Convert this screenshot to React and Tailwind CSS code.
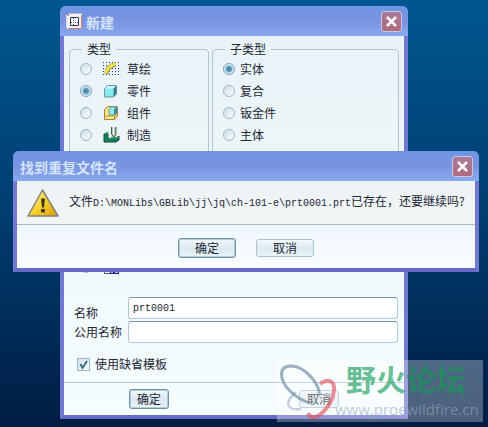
import React from "react";

const TYPES = [
  { label: "草绘", icon: <SketchIcon /> },
  { label: "零件", icon: <PartIcon />, checked: true },
  { label: "组件", icon: <AssemblyIcon /> },
  { label: "制造", icon: <ManufacturingIcon /> },
];

const SUBTYPES = [
  { label: "实体", checked: true },
  { label: "复合" },
  { label: "钣金件" },
  { label: "主体" },
];

function SketchIcon() {
  const dots = [];
  for (let y = 1; y < 15; y += 3) {
    for (let x = 0; x < 17; x += 3) dots.push(<rect key={`${x}-${y}`} x={x} y={y} width="1" height="1" />);
  }
  return (
    <svg width="17" height="16" viewBox="0 0 17 16" aria-hidden="true">
      <g fill="#26379a">{dots}</g>
      <path d="M3.500 13C4 7 7 4 13 3.500" fill="none" stroke="#a39c50" strokeWidth="4.500" />
      <path d="M3 12.500C4 7 7 4 12.500 3" fill="none" stroke="#eee34a" strokeWidth="3" />
    </svg>
  );
}

function PartIcon() {
  return (
    <svg width="17" height="16" viewBox="0 0 17 16" aria-hidden="true">
      <path d="M1.500 5.500 4.500 2.500h9v8l-3 3.500h-9z" fill="#86e9ef" stroke="#6d949c" />
      <path d="M2 5.500 4.500 3h8.500l-2.500 2.500z" fill="#c6fcfc" />
      <path d="m10.500 5.500 3-3v8.500l-3 3z" fill="#3a7e92" />
    </svg>
  );
}

function AssemblyIcon() {
  return (
    <svg width="17" height="16" viewBox="0 0 17 16" aria-hidden="true">
      <path d="M1.500 4.500 4.500 1.500h10V11l-3 3.500h-10z" fill="#f8e784" stroke="#a5823d" />
      <path d="M6 4 8 2h6v6l-2 2H6z" fill="#8ceaf0" stroke="#779a91" />
      <path d="m11 4 3-2v6l-3 2z" fill="#418b9c" />
      <path d="M2 11h9.500l3-3M11.500 11v3" fill="none" stroke="#b99032" />
    </svg>
  );
}

function ManufacturingIcon() {
  return (
    <svg width="17" height="16" viewBox="0 0 17 16" aria-hidden="true">
      <path d="M1 7h4v5h7l4-3v4l-3 2H1z" fill="#168358" stroke="#084f37" />
      <path d="m1 7 2-2h3L5 7zM5 12l3-2h8l-4 2z" fill="#49a47a" />
      <path d="M9 0h4v7l-2 4-2-4z" fill="#b5c5ba" />
      <path d="M8.500 0v7l2.500 4 2-4V0" fill="none" stroke="#2f644b" />
      <path d="M10 0h1v8h-1z" fill="#fff" />
    </svg>
  );
}

function MarkupIcon() {
  return (
    <svg width="17" height="16" viewBox="0 0 17 16" aria-hidden="true">
      <path d="M1.500 1.500h9v13h-9z" fill="#f5f8fc" stroke="#44516f" />
      <path d="M7 7h9v8H7z" fill="#24228a" />
      <path d="M8 10h2v2H8zM12 10h3v2h-3zM8 13h2v1H8zM12 13h3v1h-3z" fill="#b9bde9" />
    </svg>
  );
}

function AppIcon() {
  return (
    <svg width="17" height="17" viewBox="0 0 17 17" aria-hidden="true">
      <path d="M1 1h15v15H1z" fill="#f7f2ee" />
      <path d="M15.500 2v13.500H2" fill="none" stroke="#c58370" />
      <path d="M1 0h15M.5 1v14" stroke="#cfd4ea" />
      <path d="m0 0 3 2.500" stroke="#2b3556" />
      <path d="M4.500 4.500h8v8h-8z" fill="#fff" stroke="#2d3552" />
      <path d="M7.500 5v7M5 9.500h7" stroke="#4b65ad" strokeDasharray="1 1" />
    </svg>
  );
}

function WarningIcon() {
  return (
    <svg className="shrink-0" width="32" height="28" viewBox="0 0 32 28" aria-hidden="true">
      <defs>
        <linearGradient id="warning" x1="0" y1="0" x2="1" y2="1">
          <stop offset="0" stopColor="#fff6a5" />
          <stop offset="0.500" stopColor="#f9d332" />
          <stop offset="1" stopColor="#dc9506" />
        </linearGradient>
      </defs>
      <path d="M15.500 1 31 27H1z" fill="url(#warning)" stroke="#858379" strokeWidth="1.500" strokeLinejoin="round" />
      <path d="M14 9.500h4l-1 9h-2z" fill="#3c361d" />
      <rect x="14" y="20" width="4" height="3.500" rx="1" fill="#3c361d" />
    </svg>
  );
}

function TitleBar({ title, icon }) {
  return (
    <header className="-mx-1 flex h-[30px] items-center gap-[2px] rounded-t-md bg-linear-to-b from-[#6c96e4] via-[#7b93de] to-[#88a9f0] pr-[6px] pl-[6px] pt-px">
      {icon}
      <h2 className="flex-1 pl-px text-[14px] leading-4 font-bold text-[#d5e4ff]">{title}</h2>
      <button
        type="button"
        aria-label="关闭"
        className="flex size-[21px] items-center justify-center rounded-[3px] border border-[#d0c4e6] bg-linear-to-b from-[#a77c98] to-[#b0697c]"
      >
        <svg width="13" height="13" viewBox="0 0 13 13" aria-hidden="true">
          <path d="m2 2 9 9M11 2l-9 9" stroke="#fff" strokeWidth="2.500" />
        </svg>
      </button>
    </header>
  );
}

function Radio(props) {
  return (
    <input
      type="radio"
      className="size-3 shrink-0 appearance-none rounded-full border border-[#9bb7c5] bg-linear-to-br from-[#cfdde3] to-[#fafdff] checked:border-[#7ba3b8] checked:bg-[radial-gradient(circle,#347d9f_0,#5c9dba_35%,#d7e9f1_60%)]"
      {...props}
    />
  );
}

function Group({ title, className, children }) {
  return (
    <fieldset className={`h-[228px] min-w-0 rounded-[4px] border border-[#b1c5d1] px-[10px] ${className}`}>
      <legend className="ml-[2px] px-[5px] leading-4">{title}</legend>
      <div className="pt-px">{children}</div>
    </fieldset>
  );
}

function PushButton({ primary, className, children }) {
  const look = primary
    ? "h-5 border-[#6f91a3] shadow-[inset_0_0_0_1px_#b5cdd9]"
    : "h-[18px] border-[#a9c3cf]";
  return (
    <button
      type="button"
      className={`rounded-[3px] border bg-linear-to-b from-[#f4f9fc] via-[#dce9f0] to-[#e9f3f8] leading-4 ${look} ${className}`}
    >
      {children}
    </button>
  );
}

const FIELD =
  "h-[22px] min-w-0 rounded-[3px] border border-[#afc9d6] border-t-[#7895a4] bg-white px-1 font-['Liberation_Mono','Noto_Sans_CJK_SC',monospace] text-[10px] outline-none";

const WINDOW = "absolute rounded-t-md border-x-4 border-b-4 border-[#7379d0] border-b-[#656bc7]";

function NewFileDialog() {
  return (
    <section className={`${WINDOW} top-[6px] left-[60px] w-[348px] bg-linear-to-b from-[#e8f1f6] to-[#f6fdff]`}>
      <TitleBar title="新建" icon={<AppIcon />} />
      <form>
        <div className="flex gap-[3px] px-[5px] pt-[5px]">
          <Group title="类型" className="w-[140px]">
            {TYPES.map((t) => (
              <label key={t.label} className="flex h-[22px] items-center">
                <Radio name="type" defaultChecked={t.checked} />
                <span className="mr-[7px] ml-[11px]">{t.icon}</span>
                {t.label}
              </label>
            ))}
            <div className="mt-[110px] flex h-[22px] items-center gap-[11px]">
              <Radio name="type" aria-label="标记" />
              <MarkupIcon />
            </div>
          </Group>
          <Group title="子类型" className="flex-1">
            {SUBTYPES.map((t) => (
              <label key={t.label} className="flex h-[22px] items-center gap-[5px]">
                <Radio name="subtype" defaultChecked={t.checked} />
                {t.label}
              </label>
            ))}
          </Group>
        </div>
        <div className="mt-7 grid grid-cols-[54px_1fr] gap-y-[2px] pr-[6px] pl-[10px]">
          <label htmlFor="name" className="self-end leading-3">名称</label>
          <input id="name" className={FIELD} defaultValue="prt0001" />
          <label htmlFor="common-name" className="self-center leading-4">公用名称</label>
          <input id="common-name" className={FIELD} />
        </div>
        <label className="mt-[13px] ml-[13px] flex h-4 items-center gap-[5px]">
          <span className="relative flex size-[13px]">
            <input
              type="checkbox"
              defaultChecked
              className="peer size-[13px] appearance-none border border-[#9ab7c5] bg-linear-to-br from-[#d2e1e9] to-[#f8fcff]"
            />
            <svg
              className="pointer-events-none absolute inset-0 hidden peer-checked:block"
              width="13"
              height="13"
              viewBox="0 0 13 13"
              aria-hidden="true"
            >
              <path d="m3.500 6 2 4 4.500-7" fill="none" stroke="#316882" strokeWidth="1.800" />
            </svg>
          </span>
          使用缺省模板
        </label>
        <footer className="mt-[10px] flex h-[33px] items-center justify-between border-t border-[#b8c2ca] pr-[65px] pb-px pl-[65px]">
          <PushButton primary className="w-10">确定</PushButton>
          <PushButton className="w-10">取消</PushButton>
        </footer>
      </form>
    </section>
  );
}

function DuplicateNameDialog() {
  return (
    <section role="alertdialog" className={`${WINDOW} top-[151px] left-[13px] w-[466px] bg-[#eef4f6]`}>
      <TitleBar title="找到重复文件名" />
      <div className="flex h-11 items-center gap-[10px] border-b border-[#aebac2] bg-linear-to-b from-[#edf3f5] to-[#f0f5f6] pl-[10px]">
        <WarningIcon />
        <p className="leading-4 whitespace-nowrap">
          文件
          <span className="font-['Liberation_Mono',monospace] text-[10px]">
            {"D:\\MONLibs\\GBLib\\jj\\jq\\ch-101-e\\prt0001.prt"}
          </span>
          已存在，还要继续吗?
        </p>
      </div>
      <footer className="flex h-[43px] items-center justify-center gap-5 bg-linear-to-b from-[#eff7fe] to-[#fafdff] pt-[3px]">
        <PushButton primary className="w-[58px]">确定</PushButton>
        <PushButton className="w-[58px]">取消</PushButton>
      </footer>
    </section>
  );
}

function Watermark() {
  return (
    <aside className="pointer-events-none absolute top-[360px] left-[277px] flex h-[62px] w-[206px] bg-white/30">
      <svg className="shrink-0" width="60" height="62" viewBox="0 0 60 62" fill="none" aria-hidden="true">
        <path
          d="M24 49C8 51 8 41 19 32"
          stroke="#8fa3b5"
          strokeOpacity="0.500"
          strokeWidth="2.500"
        />
        <path
          d="M42 36C44 25 28 6 14 6 1 6 2 20 13 31c7 7 13 10 20 12"
          stroke="#6b879f"
          strokeOpacity="0.650"
          strokeWidth="3"
        />
        <path
          d="M43 24c8-6 15-3 14 6-1 12-11 25-19 27-4 1-6-1-7-4"
          stroke="#e05563"
          strokeOpacity="0.650"
          strokeWidth="4"
        />
      </svg>
      <div className="-ml-[2px] whitespace-nowrap">
        <p className="ml-[11px] text-[30px] leading-9 font-bold text-[#139a57]/65">野火论坛</p>
        <p className="mt-1 font-['Open_Sans',sans-serif] text-[15px] leading-[18px] text-[#8eaabe]/60">www.proewildfire.cn</p>
      </div>
    </aside>
  );
}

export default function App() {
  return (
    <main className="relative min-h-screen overflow-hidden bg-linear-to-b from-[#00578f] via-[#003d70] to-[#001d43] font-['Noto_Sans_CJK_SC',sans-serif] text-[12px] text-[#1c2733]">
      <NewFileDialog />
      <DuplicateNameDialog />
      <Watermark />
    </main>
  );
}
